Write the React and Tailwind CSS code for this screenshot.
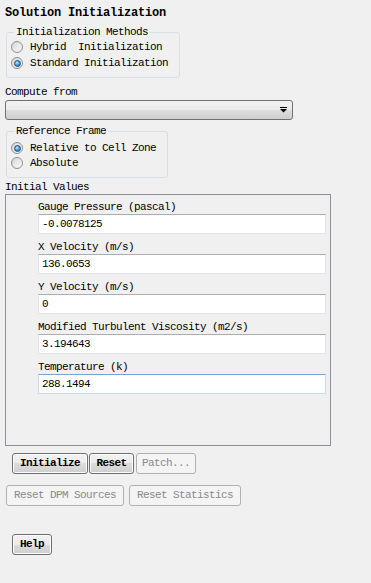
import React from "react";

function Radio({ checked, label }) {
  return (
    <div className="flex h-[16px] items-center">
      <span className="flex h-[12px] w-[12px] shrink-0 items-center justify-center rounded-full border border-[#8e8f8f] bg-[linear-gradient(135deg,#d6d6d6,#fbfbfb)]">
        {checked && (
          <span className="h-[7px] w-[7px] rounded-full border border-[#1d4f86] bg-[radial-gradient(circle_at_40%_35%,#c6ecff_0%,#4fa3e6_45%,#145aa0_100%)]" />
        )}
      </span>
      <span className="ml-[7px] whitespace-pre">{label}</span>
    </div>
  );
}

function Group({ legend, className, children }) {
  return (
    <div className={`relative ml-[6px] rounded-[3px] border border-[#d5dfe5] pl-[4px] ${className}`}>
      <span className="absolute left-[7px] top-[-8px] bg-[#f0f0f0] px-[2px] leading-[14px]">{legend}</span>
      {children}
    </div>
  );
}

function Field({ label, value, focus }) {
  return (
    <div className="mb-[6px]">
      <div className="h-[14px] leading-[14px]">{label}</div>
      <div
        className={`h-[20px] w-[288px] border bg-white pl-[3px] leading-[18px] ${
          focus
            ? "border-[#c5daed] border-t-[#7da2ce]"
            : "border-[#e2e3ea] border-t-[#abadb3]"
        }`}
      >
        {value}
      </div>
    </div>
  );
}

function Button({ label, width, disabled, className = "" }) {
  return (
    <div
      className={`flex h-[21px] items-center justify-center rounded-[3px] border ${
        disabled
          ? "border-[#adb2b5] bg-[#f4f4f4] text-[#8a8a8a]"
          : "border-[#707070] bg-[linear-gradient(#f2f2f2_0%,#ebebeb_50%,#dddddd_50%,#cfcfcf_100%)] font-bold text-black shadow-[inset_0_0_0_1px_#fcfcfc]"
      } ${width} ${className}`}
    >
      {label}
    </div>
  );
}

export default function App() {
  return (
    <div className="flex h-[583px] w-[371px] flex-col overflow-hidden bg-[#f0f0f0] font-mono text-[11px] tracking-[-0.6px] text-black">
      <div className="mt-[6px] h-[14px] pl-[5px] text-[12px] font-bold leading-[14px] tracking-[-0.2px]">
        Solution Initialization
      </div>

      <Group legend="Initialization Methods" className="mt-[12px] h-[46px] w-[174px] pt-[6px]">
        <Radio label="Hybrid  Initialization" />
        <Radio checked label="Standard Initialization" />
      </Group>

      <div className="mt-[7px] h-[14px] pl-[5px] leading-[14px]">Compute from</div>
      <div className="ml-[5px] mt-[1px] flex h-[20px] w-[288px] items-center justify-end rounded-[3px] border border-[#707070] bg-[linear-gradient(#f2f2f2_0%,#ebebeb_50%,#dddddd_50%,#cfcfcf_100%)] pr-[4px]">
        <svg width="9" height="6" viewBox="0 0 9 6">
          <rect x="1" y="0" width="7" height="1" fill="#000" />
          <path d="M1 2 H8 L4.5 5.5 Z" fill="#000" />
        </svg>
      </div>

      <Group legend="Reference Frame" className="mt-[11px] h-[47px] w-[162px] pt-[8px]">
        <div className="flex flex-col">
          <Radio checked label="Relative to Cell Zone" />
          <div className="-mt-[1px]">
            <Radio label="Absolute" />
          </div>
        </div>
      </Group>

      <div className="mt-[3px] h-[13px] pl-[5px] leading-[13px]">Initial Values</div>
      <div className="ml-[5px] h-[252px] w-[326px] border border-[#8b8f96] pl-[32px] pt-[5px]">
        <Field label="Gauge Pressure (pascal)" value="-0.0078125" />
        <Field label="X Velocity (m/s)" value="136.0653" />
        <Field label="Y Velocity (m/s)" value="0" />
        <Field label="Modified Turbulent Viscosity (m2/s)" value="3.194643" />
        <Field label="Temperature (k)" value="288.1494" focus />
      </div>

      <div className="ml-[12px] mt-[7px] flex">
        <Button label="Initialize" width="w-[76px]" />
        <Button label="Reset" width="w-[45px]" className="ml-[1px]" />
        <Button label="Patch..." width="w-[60px]" className="ml-[2px]" disabled />
      </div>

      <div className="ml-[6px] mt-[11px] flex">
        <Button label="Reset DPM Sources" width="w-[118px]" disabled />
        <Button label="Reset Statistics" width="w-[112px]" className="ml-[5px]" disabled />
      </div>

      <div className="ml-[12px] mt-[28px] flex">
        <Button label="Help" width="w-[40px]" />
      </div>
    </div>
  );
}
